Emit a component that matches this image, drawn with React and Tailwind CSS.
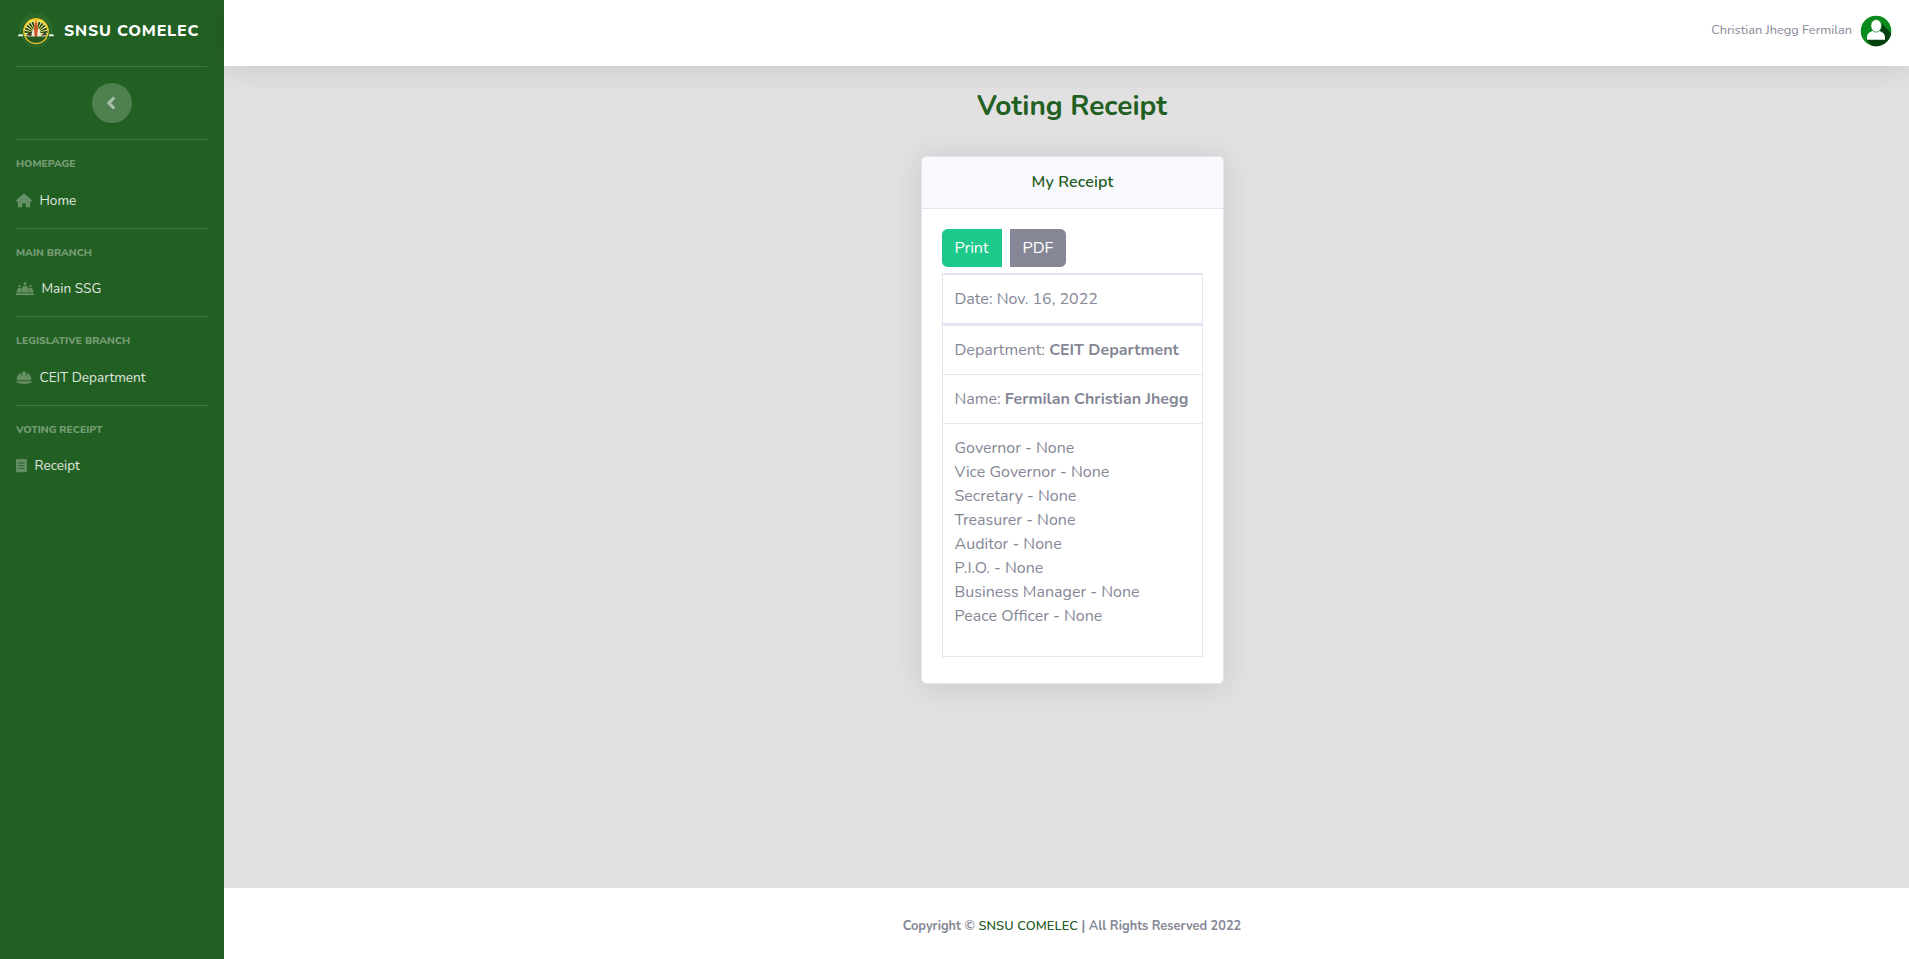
import { FaHouse, FaHelmetSafety, FaReceipt } from "react-icons/fa6";
import { FaAngleLeft } from "react-icons/fa";

function CouncilIcon({ className }) {
  return (
    <svg viewBox="0 0 18 14" preserveAspectRatio="none" fill="currentColor" className={className}>
      <rect x="0" y="11.4" width="18" height="2" rx="0.5" />
      <circle cx="9" cy="2" r="1.5" />
      <circle cx="3.5" cy="4.300" r="1.200" />
      <circle cx="14.500" cy="4.300" r="1.200" />
      <path d="M4.900 10.600 L6.200 5.600 Q6.800 3.900 9 3.900 T11.800 5.600 L13.100 10.600 Z" />
      <path d="M0.500 10.600 C0.900 7.600 1.900 6 3.600 6 C4.600 6 5.200 6.300 5.500 6.800 L4.500 10.600 Z" />
      <path d="M17.500 10.600 C17.100 7.600 16.100 6 14.400 6 C13.400 6 12.800 6.300 12.500 6.800 L13.500 10.600 Z" />
    </svg>
  );
}

const sections = [
  { heading: "HOMEPAGE", label: "Home", Icon: FaHouse, width: "w-[16px]" },
  { heading: "MAIN BRANCH", label: "Main SSG", Icon: CouncilIcon, width: "w-[18px]" },
  { heading: "LEGISLATIVE BRANCH", label: "CEIT Department", Icon: FaHelmetSafety, width: "w-[16px]" },
  { heading: "VOTING RECEIPT", label: "Receipt", Icon: FaReceipt, width: "w-[11px]" },
];

const votes = [
  "Governor",
  "Vice Governor",
  "Secretary",
  "Treasurer",
  "Auditor",
  "P.I.O.",
  "Business Manager",
  "Peace Officer",
];

const rays = [-84, -67, -50, -34, -18, 18, 34, 50, 67, 84];

function Logo() {
  return (
    <svg viewBox="0 0 38 36" className="h-9 w-[38px] shrink-0">
      <circle cx="19" cy="18.5" r="17" fill="#2c6a2b" />
      <circle cx="19" cy="19" r="13.6" fill="#1c5620" />
      <circle cx="19" cy="19" r="12.9" fill="#e8c424" />
      <circle cx="19" cy="19.3" r="11.4" fill="#f6ec86" />
      {rays.map((a) => (
        <path key={a} d="M18.7 17 L18 9.400 L20 9.400 L19.300 17 Z" fill="#1d451a" transform={`rotate(${a} 19 21)`} />
      ))}
      <path d="M8 22 h22 a11.2 11.2 0 0 1 -22 0 Z" fill="#cfc98a" />
      <path d="M9 23 l5 -4 1 5 Z M24 23.500 l4 -3.500 2 3 Z" fill="#3c3a30" />
      <path d="M14 26 l2 -9 h2 v9 Z M20.5 26 v-9 h2 l2 9 Z" fill="#f0ead6" />
      <path d="M17.700 10.5 h2.400 l.8 7 -1 7.5 h-2.200 l-.8 -7.5 Z" fill="#c8572f" />
      <circle cx="19" cy="9.400" r="1.500" fill="#e9942f" />
      <path d="M7.500 24.500 h23 a12.500 12.500 0 0 1 -23 0 Z" fill="#245a22" />
      <path d="M8.200 25 a12.200 12.200 0 0 0 21.600 0" fill="none" stroke="#e3c02a" strokeWidth="1.500" />
      <path d="M1.6 22.3 h4.400 v2 h-5.200 Z M32 22.3 h4.400 l.8 2 h-5.200 Z" fill="#e6ece2" />
      <path d="M3 25 q2 4 4.500 6 M35 25 q-2 4 -4.500 6" fill="none" stroke="#174f1a" strokeWidth="1" />
    </svg>
  );
}

function Avatar() {
  return (
    <svg viewBox="0 0 32 32" className="size-8">
      <defs>
        <clipPath id="disc">
          <circle cx="16" cy="16" r="15.3" />
        </clipPath>
      </defs>
      <g clipPath="url(#disc)">
        <rect width="32" height="32" fill="#0a8a1c" />
        <path d="M20 7 L34 21 V34 H14 L7 25 Z" fill="#07400f" />
      </g>
      <path d="M7 24.800 v-2.300 c0 -4 3 -6.200 6 -6.600 h6 c3 .4 6 2.600 6 6.600 v2.300 Z" fill="#fff" />
      <ellipse cx="16.200" cy="10.800" rx="5.400" ry="6.300" fill="#fff" stroke="#0a7a1a" strokeWidth="0.700" />
    </svg>
  );
}

function Sidebar() {
  return (
    <nav className="flex w-[224px] shrink-0 flex-col bg-[#225f22] px-4">
      <div className="flex h-[66px] items-start gap-[9px] pt-[12px] pl-[1px]">
        <Logo />
        <span className="whitespace-nowrap pt-[6.500px] text-[16px]/[24px] font-extrabold tracking-[0.8px] text-white">
          SNSU COMELEC
        </span>
      </div>
      <div className="h-px bg-white/15" />
      <div className="flex h-[72px] items-center justify-center">
        <button className="flex size-10 items-center justify-center rounded-full bg-white/20 text-white/50">
          <FaAngleLeft className="size-[20px] -translate-x-px" />
        </button>
      </div>
      {sections.map(({ heading, label, Icon, width }) => (
        <section key={heading} className="h-[88.500px] border-t border-white/15">
          <h2 className="pt-[16px] text-[10.4px]/[15.600px] font-extrabold text-white/40">{heading}</h2>
          <a className="flex items-center pt-[19px] text-[13.6px]/[20.400px] text-white/85">
            <Icon className={`${width} h-[14.4px] -translate-y-[0.5px] text-white/30`} />
            <span className="pl-[7.500px]">{label}</span>
          </a>
        </section>
      ))}
    </nav>
  );
}

function Cell({ children, className }) {
  return <div className={`border-[#e3e6f0] pr-3 pl-[11.500px] pt-3 ${className}`}>{children}</div>;
}

function Receipt() {
  return (
    <div className="mt-[33px] w-[303px] rounded-[5.600px] border border-[#e3e6f0] bg-white pb-[26px] shadow-[0_2.400px_28px_0_rgba(58,59,69,0.15)]">
      <div className="h-[52px] rounded-t-[4.600px] border-b border-[#e3e6f0] bg-[#f8f9fc] pt-[13px] text-center font-semibold tracking-[0.150px] text-[#1f5a1f]">
        My Receipt
      </div>
      <div className="px-5 pt-5">
        <div className="flex gap-2 pb-[6px] text-white">
          <button className="h-[38px] w-[60px] rounded-l-[5.600px] bg-[#1cc88a] pr-px">Print</button>
          <button className="h-[38px] w-[56px] rounded-r-[5.600px] bg-[#858796]">PDF</button>
        </div>
        <div className="border-x border-b border-[#e3e6f0]">
          <Cell className="h-[53px] border-t-2 border-b-3">Date: Nov. 16, 2022</Cell>
          <Cell className="h-[49px] border-b">
            Department: <b>CEIT Department</b>
          </Cell>
          <Cell className="h-[49px] whitespace-nowrap border-b">
            Name: <b>Fermilan Christian Jhegg</b>
          </Cell>
          <Cell className="h-[232px]">
            {votes.map((v) => (
              <div key={v}>{v} - None</div>
            ))}
          </Cell>
        </div>
      </div>
    </div>
  );
}

export default function App() {
  return (
    <div className="flex h-[959px] overflow-hidden bg-[#e1e1e1] font-['Nunito','Lato',sans-serif] text-[16px]/[24px] text-[#858796]">
      <Sidebar />
      <div className="flex grow flex-col">
        <header className="flex h-[66px] shrink-0 items-start justify-end gap-[8px] bg-white pt-[15px] pr-[17px] shadow-[0_2.400px_28px_0_rgba(58,59,69,0.15)]">
          <span className="pt-[5px] text-[12.8px]/[20px]">Christian Jhegg Fermilan</span>
          <Avatar />
        </header>
        <main className="flex grow flex-col items-center pt-[23px] pl-[12px]">
          <h1 className="pr-px text-[28px]/[34px] font-bold text-[#225f22]">Voting Receipt</h1>
          <Receipt />
        </main>
        <footer className="flex h-[71px] shrink-0 justify-center bg-white pt-[28px] pl-[11px] text-[12.8px]/[20px] font-bold">
          <span>
            Copyright © <span className="font-semibold tracking-[0.120px] text-[#1f5a1f]">SNSU COMELEC</span> | All Rights Reserved 2022
          </span>
        </footer>
      </div>
    </div>
  );
}
